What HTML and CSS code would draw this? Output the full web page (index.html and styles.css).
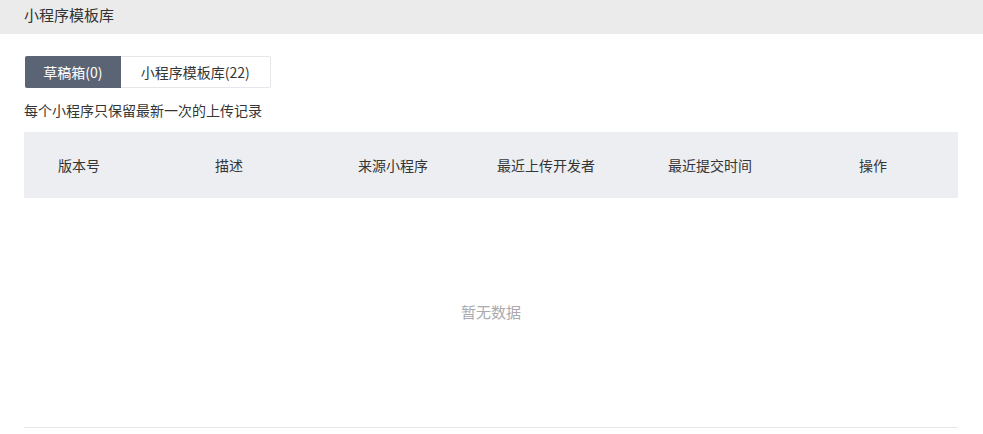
FILE: index.html
```html
<!DOCTYPE html>
<html lang="zh">
<head>
<meta charset="utf-8">
<link rel="stylesheet" href="styles.css">
</head>
<body>
<div class="topbar">小程序模板库</div>
<main class="content">
  <div class="tabs">
    <div class="tab active">草稿箱(0)</div>
    <div class="tab">小程序模板库(22)</div>
  </div>
  <p class="note">每个小程序只保留最新一次的上传记录</p>
  <div class="table">
    <div class="thead">
      <div class="th c1">版本号</div>
      <div class="th c2">描述</div>
      <div class="th c3">来源小程序</div>
      <div class="th c4">最近上传开发者</div>
      <div class="th c5">最近提交时间</div>
      <div class="th c6">操作</div>
    </div>
    <div class="empty">暂无数据</div>
  </div>
</main>
</body>
</html>
```
FILE: styles.css
```css
* { box-sizing: border-box; }
html, body { margin: 0; padding: 0; background: #fff; }
body {
  font-family: "Microsoft YaHei", "Noto Sans CJK SC", "Noto Sans", sans-serif;
  color: #353535;
  font-size: 14px;
}
.topbar {
  height: 34px;
  background: #ebebeb;
  padding-left: 24px;
  font-size: 15px;
  line-height: 30px;
  color: #333;
}
.content {
  padding: 22px 25px 0 24px;
}
.tabs {
  display: flex;
  width: 246px;
  height: 32px;
  border: 1px solid #e7e7eb;
  border-radius: 2px;
  margin-left: 1px;
}
.tab {
  display: flex;
  align-items: center;
  justify-content: center;
  font-size: 14px;
  color: #353535;
  width: 150px;
  margin-top: -1px;
  margin-bottom: -1px;
}
.tab.active {
  width: 96px;
  margin-left: -1px;
  background: #5b6475;
  color: #fff;
  border-radius: 2px 0 0 2px;
}
.note {
  margin: 0;
  height: 44px;
  line-height: 44px;
  font-size: 14px;
  color: #353535;
}
.table {
  width: 934px;
  border-bottom: 1px solid #e4e6ea;
}
.thead {
  display: flex;
  height: 66px;
  align-items: center;
  background: #eceef1;
}
.th {
  padding-left: 34px;
  font-size: 14px;
  color: #353535;
}
.c1 { width: 157px; }
.c2 { width: 143px; }
.c3 { width: 139px; }
.c4 { width: 171px; }
.c5 { width: 191px; }
.c6 { width: 133px; }
.empty {
  height: 229px;
  display: flex;
  align-items: center;
  justify-content: center;
  color: #aaaaaf;
  font-size: 15px;
  padding-bottom: 3px;
}
```
